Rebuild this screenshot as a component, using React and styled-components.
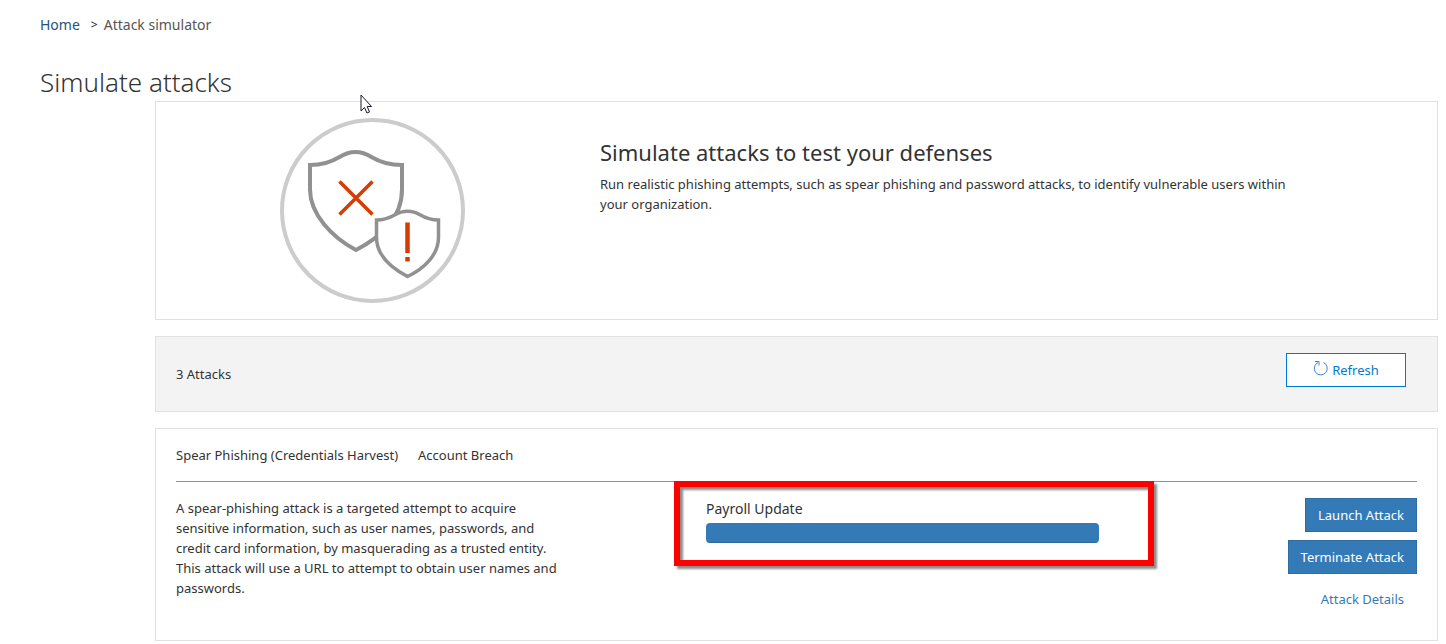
import React from 'react';
import styled, { createGlobalStyle } from 'styled-components';

const GlobalStyle = createGlobalStyle`
    * {
        box-sizing: border-box;
    }
    body {
        margin: 0;
        background-color: white;
        color: #333333;
        font-family: 'Noto Sans', 'Open Sans', sans-serif;
        font-size: 13px;
        line-height: 20px;
    }
`;

const Page = styled.div`
    position: relative;
    padding: 14px 8px 0 40px;
`;
const Breadcrumb = styled.nav`
    display: flex;
    align-items: center;
    font-size: 14px;
    line-height: 22px;
    color: #555555;
`;
const HomeLink = styled.a`
    color: #23527c;
    text-decoration: none;
`;
const Separator = styled.span`
    margin: 0 6px 0 11px;
    font-size: 12px;
    color: #222222;
`;
const PageTitle = styled.h1`
    margin: 27px 0 0;
    font-size: 26px;
    font-weight: 300;
    line-height: 38px;
`;
const Content = styled.main`
    display: flex;
    flex-direction: column;
    gap: 16px;
    margin-left: 115px;
`;

//Card Styles
const Card = styled.section`
    border: 1px solid #e1e1e1;
    background-color: white;
`;
const HeroCard = styled(Card)`
    display: grid;
    grid-template-columns: 444px 1fr;
    padding: 16px 140px 16px 0;
`;
const HeroPicture = styled.div`
    padding-left: 124px;
    line-height: 0;
`;
const HeroText = styled.div`
    padding-top: 18px;
`;
const HeroTitle = styled.h2`
    margin: 0 0 6px;
    font-size: 22px;
    font-weight: 400;
    line-height: 32px;
`;
const Paragraph = styled.p`
    margin: 0;
`;
const ToolbarCard = styled(Card)`
    display: flex;
    justify-content: space-between;
    align-items: flex-start;
    padding: 16px 31px 24px 20px;
    background-color: #f3f3f3;
`;
const AttackCount = styled.span`
    padding-top: 11px;
`;
const AttackCard = styled(Card)`
    padding: 16px 20px 24px;
`;
const AttackHeader = styled.header`
    display: flex;
    gap: 20px;
    padding-bottom: 16px;
    line-height: 20px;
    border-bottom: 1px solid #8f8f8f;
`;
const AttackBody = styled.div`
    display: grid;
    grid-template-columns: 530fr 393fr 318fr;
    padding-top: 16px;
`;
const Description = styled(Paragraph)`
    max-width: 392px;
`;

//Button Styles
const RefreshButton = styled.button`
    display: flex;
    justify-content: center;
    align-items: center;
    gap: 3px;
    width: 120px;
    height: 34px;
    padding: 0;
    border: 1px solid #0078d7;
    background-color: white;
    color: #0078d7;
    font: inherit;
`;
const ButtonList = styled.div`
    display: flex;
    flex-direction: column;
    align-items: flex-end;
    gap: 8px;
`;
const PrimaryButton = styled.button`
    height: 34px;
    padding: 0 12px;
    border: 1px solid #2e6da4;
    background-color: #337ab7;
    color: white;
    font: inherit;
`;
const DetailsLink = styled.a`
    padding: 7px 13px;
    color: #337ab7;
    text-decoration: none;
`;

//Progress Styles
const Campaign = styled.div`
    position: relative;
`;
const CampaignName = styled.div`
    font-size: 14px;
    line-height: 22px;
`;
const ProgressTrack = styled.div`
    height: 20px;
    margin-top: 3px;
    border-radius: 4px;
    overflow: hidden;
    background-color: #f5f5f5;
`;
const ProgressFill = styled.div`
    height: 100%;
    background-color: #337ab7;
    box-shadow: inset 0 -1px 0 rgba(0, 0, 0, 0.15);
`;
const Highlight = styled.div`
    position: absolute;
    top: -17px;
    left: -32px;
    right: -55px;
    height: 85px;
    border: 6px solid #ff0000;
    pointer-events: none;
    filter: drop-shadow(3px 3px 1px rgba(0, 0, 0, 0.45));
`;
const Pointer = styled.svg`
    position: absolute;
    top: 94px;
    left: 360px;
`;

const ShieldPicture = () => (
    <svg width="185" height="185" viewBox="0.5 0.5 185 185" fill="none" aria-hidden="true">
        <circle cx="93" cy="93" r="90.5" stroke="#cccccc" strokeWidth="4" />
        <path
            d="M30.5 47.5C42 47.5 51 45 60 39.500C71 32.500 81 32.500 92 39.500C101 45 110 47.500 122.500 47.500V72C122.500 102 100 120 76.500 132.500C53 120 30.500 97 30.500 72Z"
            fill="white"
            stroke="#919191"
            strokeWidth="4"
        />
        <path
            d="M97 102.500C104 102.500 110 100.500 116 97C123 92.500 133 92.500 140 97C146 100.500 151 102.500 159 102.500V120C159 137 145 151 128 159C111 150 97 137 97 120Z"
            fill="white"
            stroke="#919191"
            strokeWidth="3.500"
        />
        <path d="M60 64L93 97M93 64L60 97" stroke="#d83b01" strokeWidth="3.500" />
        <path d="M128 105V135.500M128 139.500V144" stroke="#d83b01" strokeWidth="4.500" />
    </svg>
);

const RefreshIcon = () => (
    <svg width="16" height="20" viewBox="0 0 16 20" fill="none" stroke="#3a86dc" aria-hidden="true">
        <path d="M10.500 2.500A6.500 6.500 0 1 1 5 2.500" />
        <path d="M2 1.500H6V5.500" />
    </svg>
);

const attack = {
    Type: 'Spear Phishing (Credentials Harvest)',
    Category: 'Account Breach',
    About: 'A spear-phishing attack is a targeted attempt to acquire sensitive information, such as user names, passwords, and credit card information, by masquerading as a trusted entity. This attack will use a URL to attempt to obtain user names and passwords.',
    Campaign: 'Payroll Update',
    Progress: 100,
};

const Attack = (props) => (
    <AttackCard>
        <AttackHeader>
            <span>{props.attackInfo.Type}</span>
            <span>{props.attackInfo.Category}</span>
        </AttackHeader>
        <AttackBody>
            <Description>{props.attackInfo.About}</Description>
            <Campaign>
                <CampaignName id="campaign">{props.attackInfo.Campaign}</CampaignName>
                <ProgressTrack role="progressbar" aria-labelledby="campaign" aria-valuenow={props.attackInfo.Progress}>
                    <ProgressFill style={{ width: `${props.attackInfo.Progress}%` }} />
                </ProgressTrack>
                <Highlight />
            </Campaign>
            <ButtonList>
                <PrimaryButton>Launch Attack</PrimaryButton>
                <PrimaryButton>Terminate Attack</PrimaryButton>
                <DetailsLink href="#details">Attack Details</DetailsLink>
            </ButtonList>
        </AttackBody>
    </AttackCard>
);

const App = () => (
    <>
        <GlobalStyle />
        <Page>
            <Breadcrumb>
                <HomeLink href="#home">Home</HomeLink>
                <Separator>&gt;</Separator>
                <span>Attack simulator</span>
            </Breadcrumb>
            <PageTitle>Simulate attacks</PageTitle>
            <Content>
                <HeroCard>
                    <HeroPicture>
                        <ShieldPicture />
                    </HeroPicture>
                    <HeroText>
                        <HeroTitle>Simulate attacks to test your defenses</HeroTitle>
                        <Paragraph>
                            Run realistic phishing attempts, such as spear phishing and password attacks, to identify vulnerable users within your organization.
                        </Paragraph>
                    </HeroText>
                </HeroCard>
                <ToolbarCard>
                    <AttackCount>3 Attacks</AttackCount>
                    <RefreshButton>
                        <RefreshIcon />
                        Refresh
                    </RefreshButton>
                </ToolbarCard>
                <Attack attackInfo={attack} />
            </Content>
            <Pointer width="13" height="20" viewBox="0 0 13 20" aria-hidden="true">
                <path d="M1 1V17L4.500 13.500L7 19L9.500 18L7.200 12.500H11.500Z" fill="white" stroke="#1a1a2a" />
            </Pointer>
        </Page>
    </>
);

export default App;
